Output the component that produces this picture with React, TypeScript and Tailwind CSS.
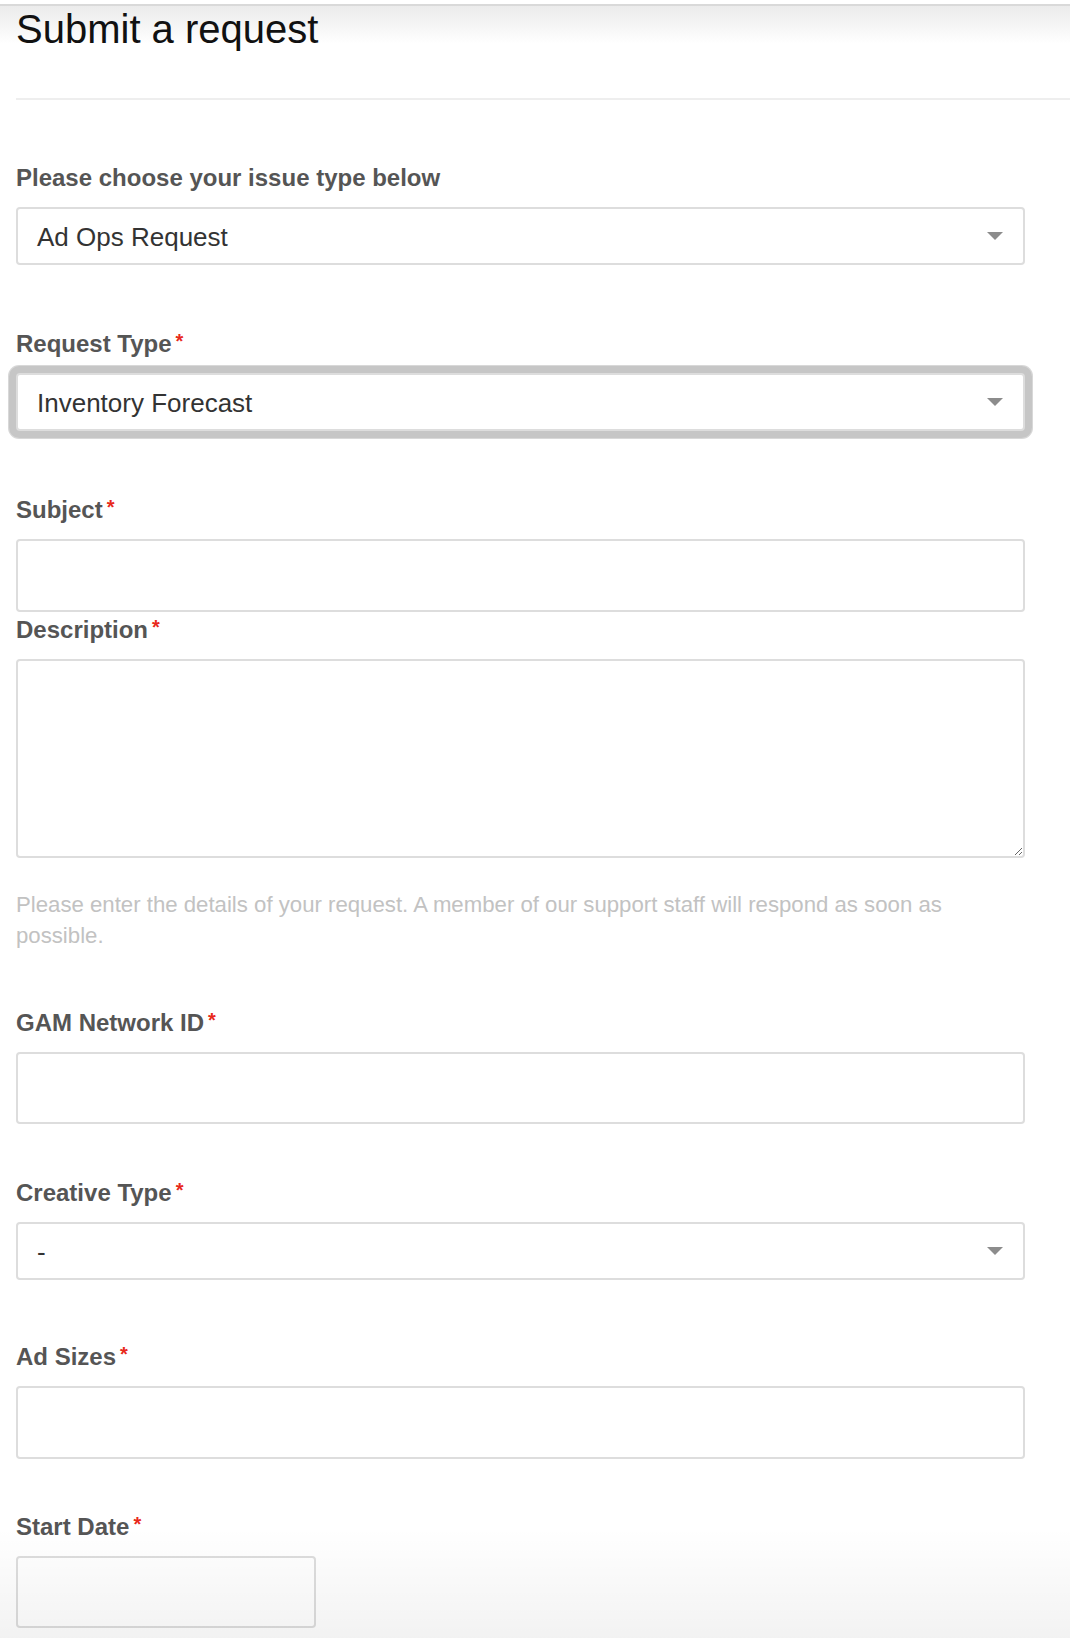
import type { ReactNode } from "react";

const font = { fontFamily: '"Liberation Sans", Arial, sans-serif' };

function Label({ text, required = true, className = "" }: { text: string; required?: boolean; className?: string }) {
  return (
    <div className={`flex items-start text-[24px] leading-[24px] font-bold text-[#555] mb-[17px] ${className}`}>
      <span>{text}</span>
      {required && <span className="ml-[4px] text-[20px] leading-[18px] text-[#e8291c]">*</span>}
    </div>
  );
}

function Caret() {
  return (
    <svg width="16" height="8" viewBox="0 0 16 8" className="shrink-0">
      <path d="M0 0 L16 0 L8 8 Z" fill="#8c8c8c" />
    </svg>
  );
}

function Select({ value, focused = false }: { value: string; focused?: boolean }) {
  return (
    <div
      className={`flex items-center justify-between h-[58px] w-full pl-[19px] pr-[20px] bg-white border-2 border-[#dddddd] rounded-[4px] text-[26px] text-[#333] ${
        focused ? "shadow-[0_0_0_7px_#c6c6c6,0_0_0_8px_#d8d8d8]" : ""
      }`}
    >
      <span className="pt-[3px]">{value}</span>
      <Caret />
    </div>
  );
}

function Input({ className = "" }: { className?: string }) {
  return (
    <input
      type="text"
      className={`block bg-white border-2 border-[#dddddd] rounded-[4px] outline-none ${className}`}
    />
  );
}

function Field({ children, className = "" }: { children: ReactNode; className?: string }) {
  return <div className={className}>{children}</div>;
}

export default function App() {
  return (
    <div className="relative w-full min-h-[1638px] bg-white overflow-hidden" style={font}>
      {/* top window fade */}
      <div className="absolute top-[4px] left-0 right-0 h-[40px] border-t-2 border-[#d9d9d9] bg-gradient-to-b from-[#ebebeb] to-white/0" />

      <div className="relative pl-[16px]">
        <h1 className="pt-[9px] text-[40px] leading-[40px] font-normal text-[#111]">Submit a request</h1>
        <div className="mt-[49px] h-[2px] bg-[#eeeeee]" />

        <div className="w-[1009px]">
          <Field className="mt-[66px]">
            <Label text="Please choose your issue type below" required={false} />
            <Select value="Ad Ops Request" />
          </Field>

          <Field className="mt-[67px]">
            <Label text="Request Type" />
            <Select value="Inventory Forecast" focused />
          </Field>

          <Field className="mt-[67px]">
            <Label text="Subject" />
            <Input className="w-full h-[73px]" />
          </Field>

          <Field className="mt-[6px]">
            <Label text="Description" />
            <textarea className="block w-full h-[199px] bg-white border-2 border-[#dddddd] rounded-[4px] outline-none resize-y" />
            <p className="mt-[31px] text-[22.2px] leading-[31px] text-[#c2c2c2]">
              Please enter the details of your request. A member of our support staff will respond as soon as possible.
            </p>
          </Field>

          <Field className="mt-[60px]">
            <Label text="GAM Network ID" />
            <Input className="w-full h-[72px]" />
          </Field>

          <Field className="mt-[57px]">
            <Label text="Creative Type" />
            <Select value="-" />
          </Field>

          <Field className="mt-[65px]">
            <Label text="Ad Sizes" />
            <Input className="w-full h-[73px]" />
          </Field>

          <Field className="mt-[56px]">
            <Label text="Start Date" />
            <Input className="w-[300px] h-[72px]" />
          </Field>
        </div>
      </div>

      {/* bottom window fade */}
      <div className="pointer-events-none absolute bottom-0 left-0 right-0 h-[110px] bg-gradient-to-b from-black/0 to-black/[0.05]" />
    </div>
  );
}
